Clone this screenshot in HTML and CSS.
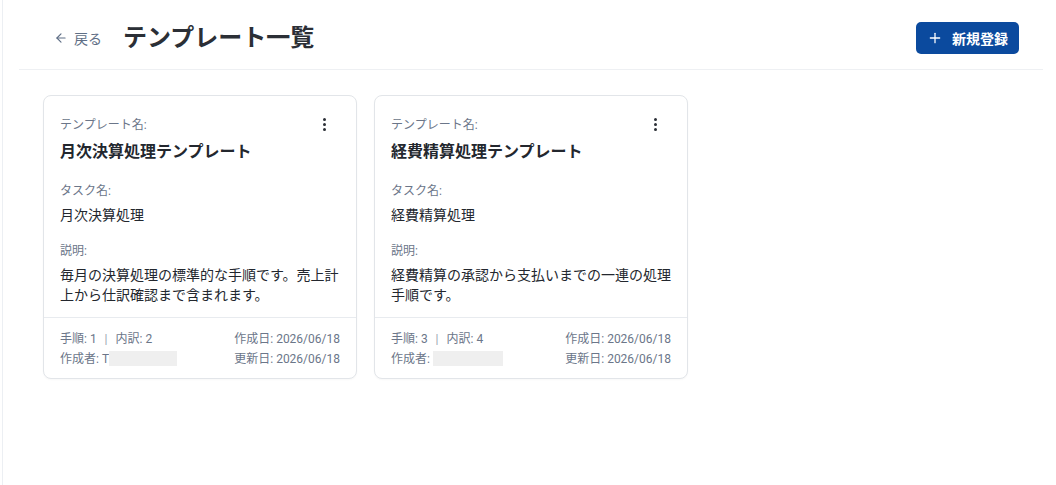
FILE: index.html
```html
<!DOCTYPE html>
<html lang="ja">
<head>
  <meta charset="UTF-8">
  <meta name="viewport" content="width=device-width, initial-scale=1.0">
  <title>テンプレート一覧</title>
  <link rel="stylesheet" href="styles.css">
</head>
<body>
  <div class="layout">
    <main class="main">
      <header class="page-header">
        <a class="back-link" href="#">
          <svg width="14" height="14" viewBox="0 0 24 24" fill="none" stroke="currentColor" stroke-width="2" stroke-linecap="round" stroke-linejoin="round">
            <path d="M19 12H5"/>
            <path d="M12 19l-7-7 7-7"/>
          </svg>
          戻る
        </a>
        <h1 class="page-title">テンプレート一覧</h1>
        <button class="btn-primary" type="button">
          <svg width="14" height="14" viewBox="0 0 24 24" fill="none" stroke="currentColor" stroke-width="2.2" stroke-linecap="round">
            <path d="M12 4v16"/>
            <path d="M4 12h16"/>
          </svg>
          新規登録
        </button>
      </header>

      <section class="card-grid">
        <!-- 月次決算 -->
        <article class="card">
          <div class="card-body">
            <button class="menu-btn" type="button" aria-label="メニュー">
              <span></span><span></span><span></span>
            </button>
            <div class="field">
              <div class="field-label">テンプレート名:</div>
              <div class="card-title">月次決算処理テンプレート</div>
            </div>
            <div class="field">
              <div class="field-label">タスク名:</div>
              <div class="field-value">月次決算処理</div>
            </div>
            <div class="field">
              <div class="field-label">説明:</div>
              <div class="field-value">毎月の決算処理の標準的な手順です。売上計上から仕訳確認まで含まれます。</div>
            </div>
          </div>
          <div class="card-footer">
            <div class="meta">
              <div>手順: 1 <span class="sep">|</span> 内訳: 2</div>
              <div>作成者: T<span class="masked"></span></div>
            </div>
            <div class="meta meta-right">
              <div>作成日: 2026/06/18</div>
              <div>更新日: 2026/06/18</div>
            </div>
          </div>
        </article>

        <!-- 経費精算 -->
        <article class="card">
          <div class="card-body">
            <button class="menu-btn" type="button" aria-label="メニュー">
              <span></span><span></span><span></span>
            </button>
            <div class="field">
              <div class="field-label">テンプレート名:</div>
              <div class="card-title">経費精算処理テンプレート</div>
            </div>
            <div class="field">
              <div class="field-label">タスク名:</div>
              <div class="field-value">経費精算処理</div>
            </div>
            <div class="field">
              <div class="field-label">説明:</div>
              <div class="field-value">経費精算の承認から支払いまでの一連の処理手順です。</div>
            </div>
          </div>
          <div class="card-footer">
            <div class="meta">
              <div>手順: 3 <span class="sep">|</span> 内訳: 4</div>
              <div>作成者: <span class="masked masked-wide"></span></div>
            </div>
            <div class="meta meta-right">
              <div>作成日: 2026/06/18</div>
              <div>更新日: 2026/06/18</div>
            </div>
          </div>
        </article>
      </section>
    </main>
  </div>
</body>
</html>
```

FILE: styles.css
```css
* {
  box-sizing: border-box;
}

body {
  margin: 0;
  font-family: Roboto, 'Noto Sans CJK JP', 'Noto Sans', sans-serif;
  color: #212529;
  background-color: #fff;
}

.layout {
  min-height: 100vh;
  padding-left: 2px;
  display: flex;
}

.main {
  flex: 1;
  min-height: 100vh;
  border-left: 1px solid #eceff3;
  padding: 0 13px 0 16px;
}

/* header */
.page-header {
  display: flex;
  align-items: center;
  padding: 22px 24px 15px 35px;
  border-bottom: 1px solid #eef0f3;
}

.back-link {
  display: inline-flex;
  align-items: center;
  gap: 6px;
  color: #5f6f86;
  font-size: 14px;
  text-decoration: none;
  margin-right: 21px;
}

.page-title {
  margin: 0;
  font-size: 24px;
  font-weight: 700;
  line-height: 32px;
  color: #2b2f36;
  flex: 1;
}

.btn-primary {
  display: inline-flex;
  align-items: center;
  gap: 10px;
  height: 32px;
  padding: 0 11px 0 12px;
  border: none;
  border-radius: 5px;
  background-color: #0b4a9e;
  color: #fff;
  font-family: inherit;
  font-size: 14px;
  font-weight: 700;
  cursor: pointer;
}

/* cards */
.card-grid {
  display: grid;
  grid-template-columns: repeat(auto-fill, 314px);
  gap: 17px;
  padding: 25px 24px;
}

.card {
  border: 1px solid #e2e5e9;
  border-radius: 8px;
  background-color: #fff;
  box-shadow: 0 1px 2px rgba(0, 0, 0, 0.03);
}

.card-body {
  position: relative;
  padding: 20px 16px 12px;
}

.menu-btn {
  position: absolute;
  top: 18px;
  right: 20px;
  width: 24px;
  height: 20px;
  padding: 0;
  border: none;
  background: none;
  display: flex;
  flex-direction: column;
  align-items: center;
  justify-content: center;
  gap: 2px;
  cursor: pointer;
}

.menu-btn span {
  width: 3px;
  height: 3px;
  border-radius: 50%;
  background-color: #2b2f36;
}

.field + .field {
  margin-top: 17px;
}

.field-label {
  font-size: 12px;
  line-height: 18px;
  color: #6b7689;
  margin-bottom: 5px;
}

.card-title {
  font-size: 16px;
  font-weight: 700;
  line-height: 26px;
  color: #23272e;
}

.field-value {
  font-size: 14px;
  line-height: 20px;
  color: #23272e;
}

.card-footer {
  display: flex;
  justify-content: space-between;
  border-top: 1px solid #e8ebef;
  padding: 11px 16px 9px;
  font-size: 12px;
  line-height: 20px;
  color: #6b7689;
}

.meta-right {
  text-align: right;
}

.sep {
  color: #9aa3b0;
  margin: 0 5px;
}

.masked {
  display: inline-block;
  width: 68px;
  height: 15px;
  vertical-align: -3px;
  background-color: #efefef;
}

.masked-wide {
  width: 70px;
}
```
